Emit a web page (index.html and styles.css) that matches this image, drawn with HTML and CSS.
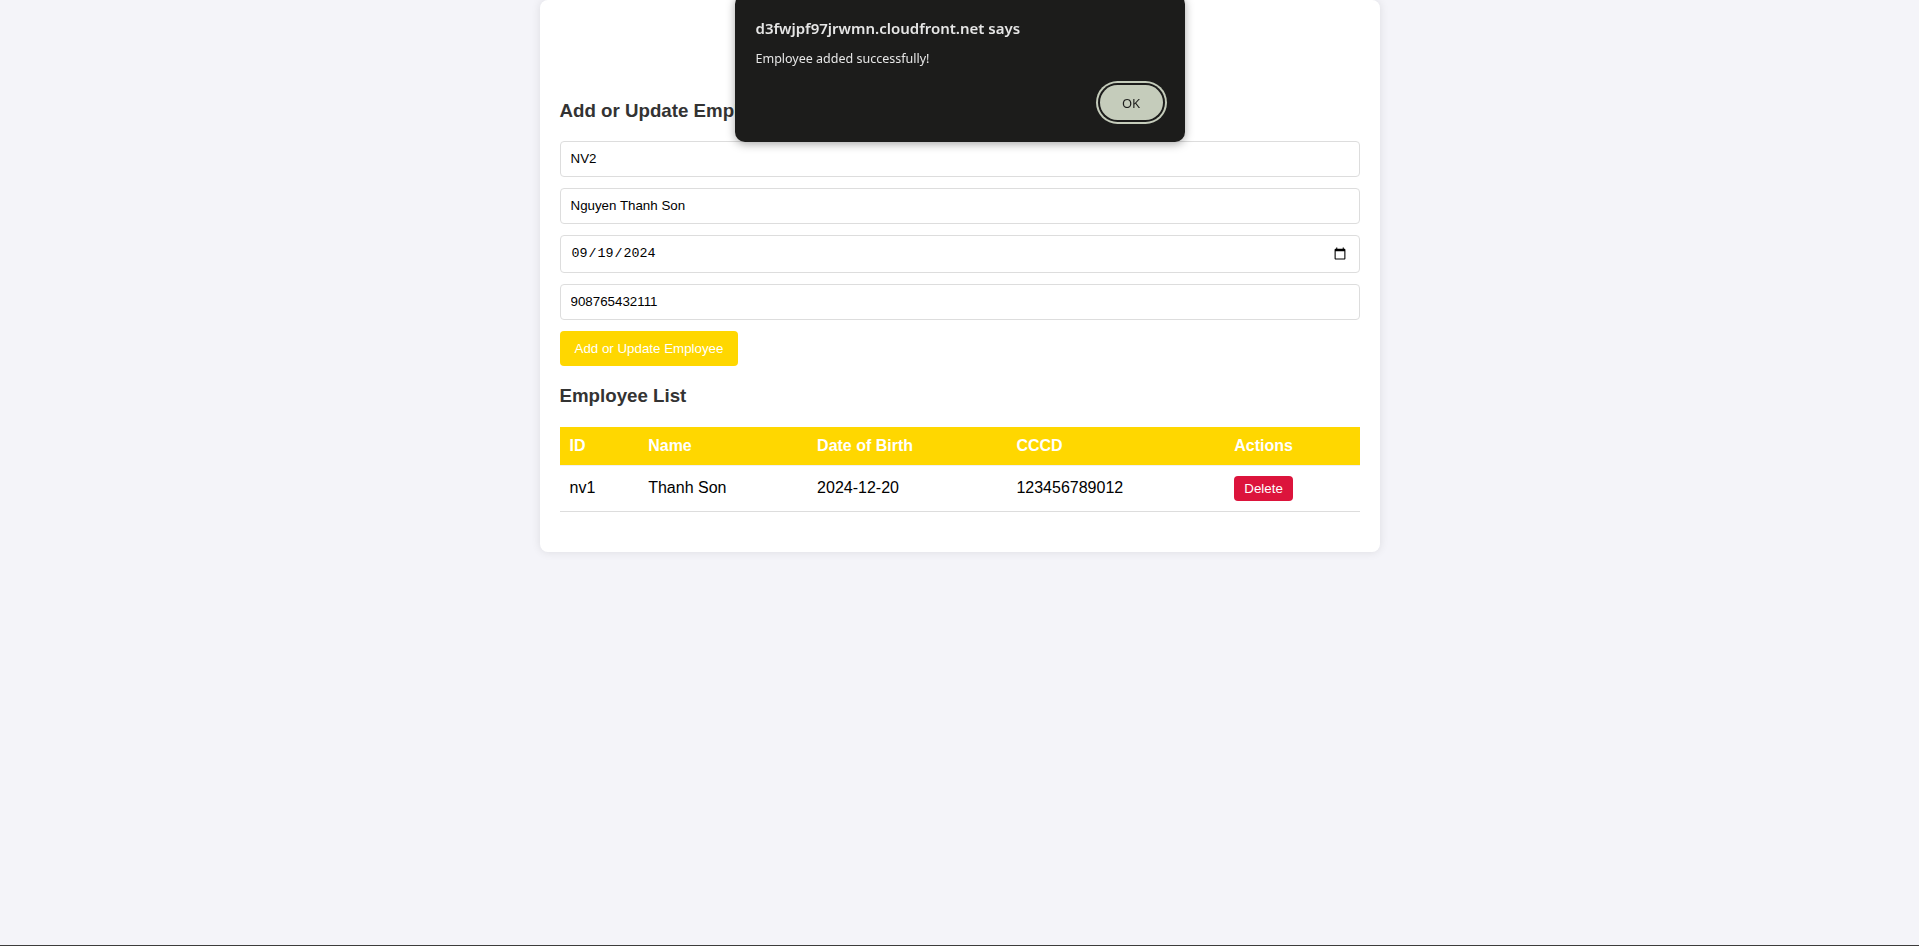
FILE: index.html
```html
<!DOCTYPE html>
<html lang="en">
<head>
<meta charset="utf-8">
<title>Employee Management</title>
<link rel="stylesheet" href="styles.css">
</head>
<body>
<div class="page">
  <main class="card">
    <div class="title-space"></div>
    <h3 class="section-title">Add or Update Employee</h3>
    <form class="emp-form">
      <input class="field" type="text" value="NV2">
      <input class="field" type="text" value="Nguyen Thanh Son">
      <input class="field field-date" type="date" value="2024-09-19">
      <input class="field" type="text" value="908765432111">
      <button type="button" class="btn-primary">Add or Update Employee</button>
    </form>
    <h3 class="section-title">Employee List</h3>
    <table class="emp-table">
      <thead>
        <tr><th>ID</th><th>Name</th><th>Date of Birth</th><th>CCCD</th><th>Actions</th></tr>
      </thead>
      <tbody>
        <tr><td>nv1</td><td>Thanh Son</td><td>2024-12-20</td><td>123456789012</td><td><button type="button" class="btn-delete">Delete</button></td></tr>
      </tbody>
    </table>
  </main>
  <div class="spacer"></div>
  <div class="bottom-edge"></div>
</div>
<div class="dialog" role="alertdialog">
  <div class="dialog-title">d3fwjpf97jrwmn.cloudfront.net says</div>
  <div class="dialog-msg">Employee added successfully!</div>
  <div class="dialog-actions"><button type="button" class="dialog-ok">OK</button></div>
</div>
</body>
</html>
```

FILE: styles.css
```css
html, body {
  height: 100%;
}
body {
  margin: 0;
  background: #f4f4f9;
  font-family: "Liberation Sans", Arial, sans-serif;
  font-size: 16px;
  color: #000;
}
.page {
  min-height: 100%;
  display: flex;
  flex-direction: column;
}
.card {
  width: 800px;
  margin: 0 auto;
  padding: 20px;
  background: #fff;
  border-radius: 8px;
  box-shadow: 0 0 10px rgba(0, 0, 0, 0.1);
}
.title-space {
  height: 37px;
  margin: 21.44px 0;
}
.section-title {
  font-size: 18.72px;
  font-weight: bold;
  color: #333;
  margin: 18.72px 0;
}
.emp-form {
  margin: 0;
}
.field {
  display: block;
  box-sizing: border-box;
  width: 100%;
  padding: 9.5px 10px;
  margin: 0 0 11px 0;
  border: 1px solid #ddd;
  border-radius: 4px;
  font-family: "Liberation Sans", Arial, sans-serif;
  font-size: 13.333px;
  color: #000;
  background: #fff;
}
.field-date {
  font-family: "Liberation Mono", monospace;
}
.btn-primary {
  display: block;
  padding: 10px 15px;
  border: none;
  border-radius: 4px;
  background: #ffd700;
  color: #fff;
  font-family: "Liberation Sans", Arial, sans-serif;
  font-size: 13.333px;
  cursor: pointer;
  margin-bottom: 3px;
}
.emp-table {
  width: 100%;
  border-collapse: collapse;
  margin: 20px 0;
}
.emp-table th,
.emp-table td {
  padding: 10px;
  text-align: left;
  border-bottom: 1px solid #ddd;
}
.emp-table th {
  background: #ffd700;
  color: #fff;
  font-weight: bold;
  border-bottom-color: #f0f0f0;
}
.btn-delete {
  padding: 5px 10px;
  border: none;
  border-radius: 4px;
  background: #dc143c;
  color: #fff;
  font-family: "Liberation Sans", Arial, sans-serif;
  font-size: 13.333px;
}
.spacer {
  flex: 1;
}
.bottom-edge {
  height: 1px;
  background: #3c3c3c;
}
.dialog {
  position: fixed;
  top: -6px;
  left: calc(50% - 225px);
  width: 450px;
  height: 148px;
  box-sizing: border-box;
  padding: 24px 18px 18px 21px;
  background: #1c1c1b;
  border-radius: 10px;
  box-shadow: 0 2px 10px rgba(0, 0, 0, 0.35);
  display: flex;
  flex-direction: column;
  font-family: "Noto Sans", "Open Sans", sans-serif;
  color: #e6e6e6;
}
.dialog-title {
  font-size: 15px;
  font-weight: 600;
  line-height: 20px;
}
.dialog-msg {
  font-size: 12.5px;
  line-height: 18px;
  margin-top: 12px;
}
.dialog-actions {
  margin-top: auto;
  display: flex;
  justify-content: flex-end;
}
.dialog-ok {
  width: 63px;
  height: 35px;
  margin: 4px;
  border: none;
  border-radius: 18px;
  background: #c5ccbb;
  color: #1c1c1b;
  font-family: "Noto Sans", "Open Sans", sans-serif;
  font-size: 13px;
  box-shadow: 0 0 0 2px #1c1c1b, 0 0 0 4px #c5ccbb;
}
```
